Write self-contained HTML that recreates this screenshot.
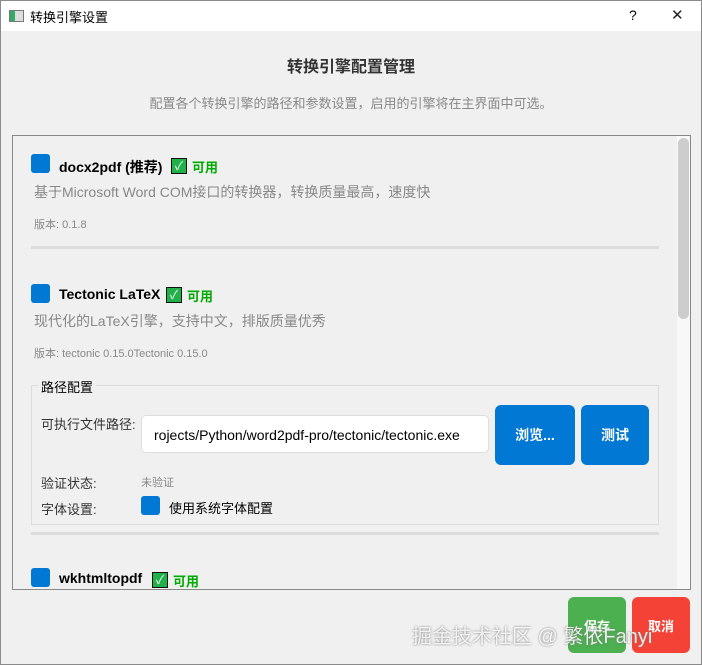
<!DOCTYPE html>
<html><head><meta charset="utf-8"><style>
*{margin:0;padding:0;box-sizing:border-box}
body{width:702px;height:665px;background:#f0f0f0;font-family:"Liberation Sans","Noto Sans CJK SC",sans-serif;position:relative;overflow:hidden;border:1px solid #8a8a8a}
.a{position:absolute;white-space:nowrap}
.tb{position:absolute;left:0;top:0;width:700px;height:30px;background:#fff}
.chk{display:inline-block;width:19px;height:19px;background:#0078d4;border-radius:3px}
.ok{display:inline-block;width:16px;height:16px;background:#21b14b;border:1px solid #111;color:#fff;font-size:12px;line-height:14px;text-align:center}
.btn{position:absolute;background:#0078d4;color:#fff;border-radius:6px;font-size:14px;font-weight:bold;display:flex;align-items:center;justify-content:center}
.sep{position:absolute;left:31px;width:628px;height:3px;background:#dcdcdc}
.g{color:#888;font-size:14px}
</style></head><body>
<div class="tb">
<div class="a" style="left:8px;top:9px;width:15px;height:12px;border:1px solid #777;background:linear-gradient(90deg,#3a6 0 40%,#ddd 40%)"></div>
<div class="a" style="left:29px;top:6px;font-size:13px">转换引擎设置</div>
<div class="a" style="left:628px;top:6px;font-size:14px">?</div>
<div class="a" style="left:670px;top:5px;font-size:15px;color:#222">✕</div>
</div>
<div class="a" style="left:0;top:52px;width:700px;text-align:center;font-size:16px;font-weight:bold;color:#333">转换引擎配置管理</div>
<div class="a" style="left:0;top:92px;width:700px;text-align:center;font-size:13px;color:#888">配置各个转换引擎的路径和参数设置，启用的引擎将在主界面中可选。</div>
<div class="a" style="left:11px;top:134px;width:679px;height:455px;border:1px solid #888;overflow:hidden">
<div class="a" style="left:664px;top:0;width:14px;height:455px;background:#f8f8f8"></div>
<div class="a" style="left:665px;top:2px;width:11px;height:181px;background:#cdcdcd;border-radius:6px"></div>
</div>
<div class="a" style="left:30px;top:153px"><span class="chk"></span></div>
<div class="a" style="left:58px;top:156px;font-size:14px;font-weight:bold">docx2pdf (推荐)</div>
<div class="a" style="left:170px;top:156px"><span class="ok">✓</span></div>
<div class="a" style="left:191px;top:156px;font-size:13px;font-weight:bold;color:#0a0">可用</div>
<div class="a g" style="left:33px;top:181px">基于Microsoft Word COM接口的转换器，转换质量最高，速度快</div>
<div class="a" style="left:33px;top:215px;font-size:11px;color:#888">版本: 0.1.8</div>
<div class="sep" style="top:245px;left:30px"></div>
<div class="a" style="left:30px;top:283px"><span class="chk"></span></div>
<div class="a" style="left:58px;top:285px;font-size:14px;font-weight:bold">Tectonic LaTeX</div>
<div class="a" style="left:165px;top:285px"><span class="ok">✓</span></div>
<div class="a" style="left:186px;top:285px;font-size:13px;font-weight:bold;color:#0a0">可用</div>
<div class="a g" style="left:33px;top:310px">现代化的LaTeX引擎，支持中文，排版质量优秀</div>
<div class="a" style="left:33px;top:344px;font-size:11px;color:#888">版本: tectonic 0.15.0Tectonic 0.15.0</div>
<div class="a" style="left:30px;top:384px;width:628px;height:140px;border:1px solid #dcdcdc"></div>
<div class="a" style="left:37px;top:376px;font-size:13px;background:#f0f0f0;padding:0 3px">路径配置</div>
<div class="a" style="left:40px;top:413px;font-size:13px;color:#333">可执行文件路径:</div>
<div class="a" style="left:140px;top:414px;width:348px;height:38px;background:#fff;border:1px solid #ddd;border-radius:5px;font-size:14px;padding:11px 0 0 12px;overflow:hidden">rojects/Python/word2pdf-pro/tectonic/tectonic.exe</div>
<div class="btn" style="left:494px;top:404px;width:80px;height:60px">浏览...</div>
<div class="btn" style="left:580px;top:404px;width:68px;height:60px">测试</div>
<div class="a" style="left:40px;top:472px;font-size:13px;color:#333">验证状态:</div>
<div class="a" style="left:140px;top:473px;font-size:11px;color:#888">未验证</div>
<div class="a" style="left:40px;top:498px;font-size:13px;color:#333">字体设置:</div>
<div class="a" style="left:140px;top:495px"><span class="chk"></span></div>
<div class="a" style="left:168px;top:497px;font-size:13px">使用系统字体配置</div>
<div class="sep" style="top:531px;left:30px"></div>
<div class="a" style="left:30px;top:567px"><span class="chk"></span></div>
<div class="a" style="left:58px;top:569px;font-size:14px;font-weight:bold">wkhtmltopdf</div>
<div class="a" style="left:151px;top:570px"><span class="ok">✓</span></div>
<div class="a" style="left:172px;top:570px;font-size:13px;font-weight:bold;color:#0a0">可用</div>
<div class="btn" style="left:567px;top:596px;width:58px;height:56px;background:#4caf50;font-size:13px">保存</div>
<div class="btn" style="left:631px;top:596px;width:58px;height:56px;background:#f44336;font-size:13px">取消</div>
<div class="a" style="left:411px;top:619px;font-size:20px;color:rgba(255,255,255,.85);text-shadow:0 0 2px #777">掘金技术社区 @ 繁依Fanyi</div>
</body></html>
